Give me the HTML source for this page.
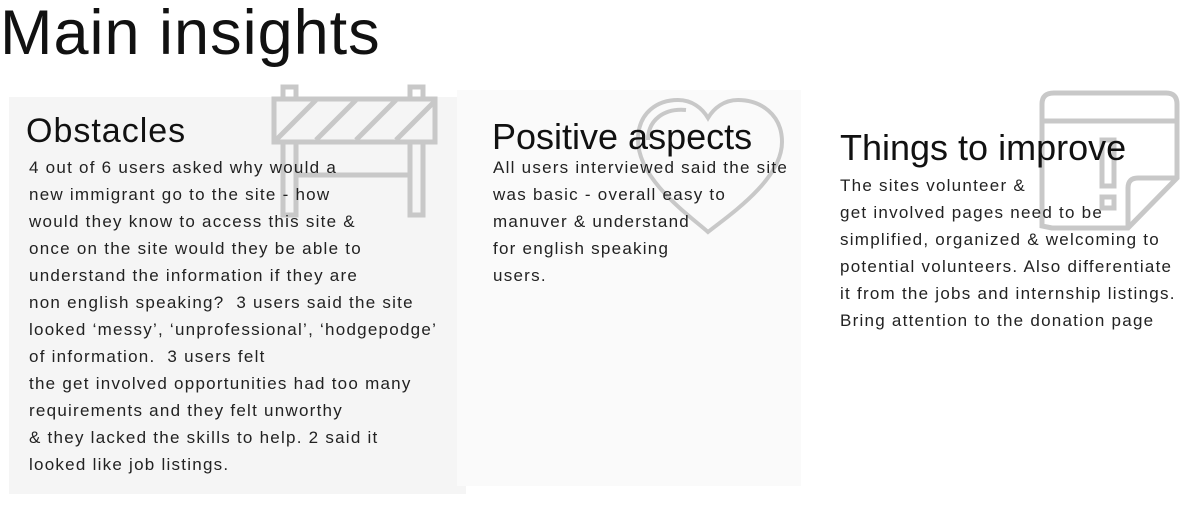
<!DOCTYPE html><html><head><style>
body{margin:0;width:1180px;height:511px;background:#fff;position:relative;overflow:hidden;font-family:"Liberation Sans",sans-serif;color:#111}
.a{position:absolute}
h1{position:absolute;left:0;top:-3px;margin:0;font-weight:400;font-size:63px;letter-spacing:1px}
.h{position:absolute;margin:0;font-weight:400;font-size:34px;white-space:nowrap}
.t{position:absolute;font-size:17px;line-height:27px;white-space:pre;color:#222;letter-spacing:1.25px}
</style></head><body>
<h1>Main insights</h1>
<div class="a" style="left:9px;top:97px;width:457px;height:397px;background:#f5f5f5"></div>
<div class="a" style="left:457px;top:90px;width:344px;height:396px;background:#fafafa"></div>
<svg class="a" style="left:0;top:0" width="1180" height="511" fill="none" stroke="#c8c8c8" stroke-width="5">
<rect x="283" y="87" width="13" height="12"/><rect x="410" y="87" width="13" height="12"/>
<rect x="283" y="142" width="13" height="73"/><rect x="410" y="142" width="13" height="73"/>
<line x1="296" y1="175" x2="410" y2="175"/>
<rect x="274" y="99" width="161" height="43"/>
<path d="M276 140L316 100M316 140L356 100M356 140L396 100M396 140L434 102"/>
<path d="M708 232C690 216 638 180 638 140C638 112 658 100 678 100C692 100 702 108 708 118C714 108 724 100 738 100C760 100 782 114 782 142C782 180 728 216 708 232Z" stroke-width="4"/>
<path d="M648 140C648 120 664 108 686 110" stroke-width="4"/>
<path d="M1052 228L1042 226V104Q1042 93 1054 93H1166Q1177 93 1177 104V178L1128 228Z"/>
<line x1="1042" y1="121" x2="1177" y2="121"/>
<path d="M1177 178H1138Q1128 178 1128 188V228"/>
<rect x="1102" y="140" width="12" height="46"/><rect x="1102" y="197" width="12" height="11"/>
</svg>
<div class="h" style="left:26px;top:112px;font-size:34px;letter-spacing:1px">Obstacles</div>
<div class="h" style="left:492px;top:116px;font-size:36px">Positive aspects</div>
<div class="h" style="left:840px;top:127px;font-size:36px">Things to improve</div>
<div class="t" style="left:29px;top:154px">4 out of 6 users asked why would a
new immigrant go to the site - how
would they know to access this site &amp;
once on the site would they be able to
understand the information if they are
non english speaking?  3 users said the site
looked ‘messy’, ‘unprofessional’, ‘hodgepodge’
of information.  3 users felt
the get involved opportunities had too many
requirements and they felt unworthy
&amp; they lacked the skills to help. 2 said it
looked like job listings.</div>
<div class="t" style="left:493px;top:154px">All users interviewed said the site
was basic - overall easy to
manuver &amp; understand
for english speaking
users.</div>
<div class="t" style="left:840px;top:172px">The sites volunteer &amp;
get involved pages need to be
simplified, organized &amp; welcoming to
potential volunteers. Also differentiate
it from the jobs and internship listings.
Bring attention to the donation page</div>
</body></html>
